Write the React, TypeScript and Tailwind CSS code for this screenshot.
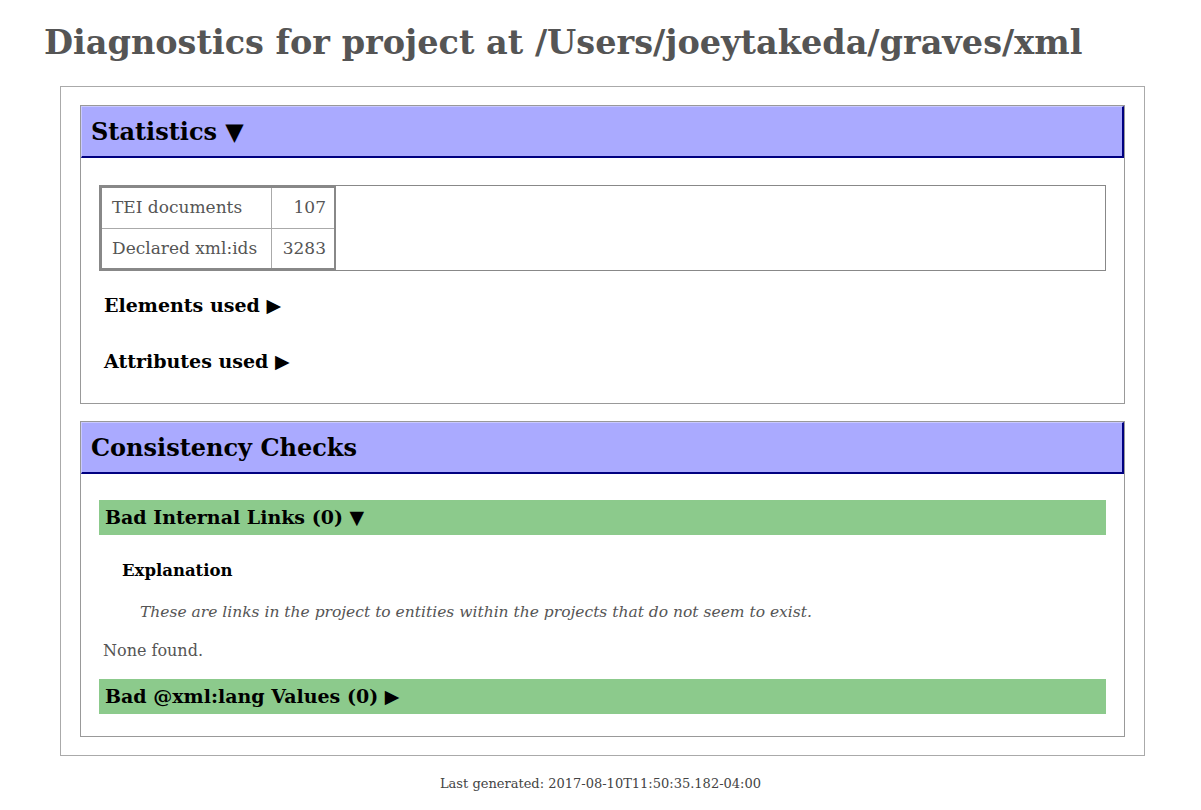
import React from "react";

const Header = ({ title }: { title: string }) => (
  <div className="h-[52px] flex items-center pl-[9px] bg-[#aaaaff] border-t border-l border-[#c9c9ff] border-b-2 border-r-2 border-b-[#000080] border-r-[#000080] text-black text-[24px] font-bold">
    {title}
  </div>
);

const GreenBar = ({ title }: { title: string }) => (
  <div className="h-[35px] flex items-center pl-[6px] bg-[#8cca8c] text-black text-[19px] font-bold">
    {title}
  </div>
);

const App = () => {
  return (
    <div className="min-h-[810px] bg-white text-[#555] font-['DejaVu_Serif',serif]">
      <h1 className="h-[86px] pl-[44px] pt-[20px] text-[33.5px] font-bold leading-[46px] text-[#555]">
        Diagnostics for project at /Users/joeytakeda/graves/xml
      </h1>

      <div className="ml-[60px] w-[1085px] border border-[#aaa] px-[19px] pt-[18px] pb-[18px] flex flex-col gap-[17px]">
        {/* Statistics */}
        <div className="border border-[#999] h-[299px]">
          <Header title="Statistics ▼" />
          <div className="px-[18px] pt-[27px]">
            <div className="border border-[#888] h-[86px]">
              <table className="border-2 border-[#888] border-collapse text-[17px]">
                <tbody>
                  <tr className="h-[41px]">
                    <td className="border border-[#aaa] pl-[10px] pr-[8px] w-[170px]">TEI documents</td>
                    <td className="border border-[#aaa] px-[8px] w-[64px] text-right">107</td>
                  </tr>
                  <tr className="h-[41px]">
                    <td className="border border-[#aaa] pl-[10px] pr-[8px]">Declared xml:ids</td>
                    <td className="border border-[#aaa] px-[8px] text-right">3283</td>
                  </tr>
                </tbody>
              </table>
            </div>
            <div className="pl-[5px] pt-[21px] flex flex-col gap-[30px] text-black text-[19px] font-bold">
              <div className="h-[26px] leading-[26px]">Elements used ▶</div>
              <div className="h-[26px] leading-[26px]">Attributes used ▶</div>
            </div>
          </div>
        </div>

        {/* Consistency Checks */}
        <div className="border border-[#999] h-[316px]">
          <Header title="Consistency Checks" />
          <div className="px-[18px] pt-[26px]">
            <GreenBar title="Bad Internal Links (0) ▼" />
            <div className="ml-[23px] mt-[24px] h-[24px] leading-[24px] text-black text-[16.5px] font-bold">
              Explanation
            </div>
            <div className="ml-[41px] mt-[17px] h-[24px] leading-[24px] text-[15.5px] italic">
              These are links in the project to entities within the projects that do not seem to exist.
            </div>
            <div className="ml-[4px] mt-[15px] h-[24px] leading-[24px] text-[16px]">None found.</div>
            <div className="mt-[16px]">
              <GreenBar title="Bad @xml:lang Values (0) ▶" />
            </div>
          </div>
        </div>
      </div>

      <div className="text-center pt-[18px] text-[13px] text-[#444] leading-[20px]">
        Last generated: 2017-08-10T11:50:35.182-04:00
      </div>
    </div>
  );
};

export default App;
